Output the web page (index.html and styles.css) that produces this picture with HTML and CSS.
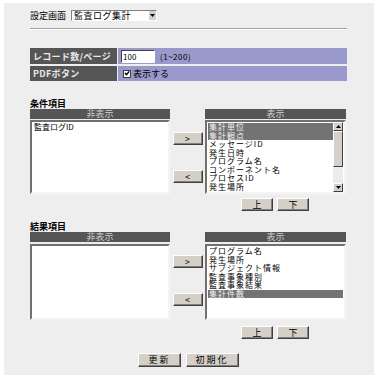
FILE: index.html
```html
<!DOCTYPE html>
<html lang="ja">
<head>
  <meta charset="UTF-8" />
  <title>監査ログ集計 設定</title>
  <link rel="stylesheet" href="styles.css">
</head>
<body>
  <div class="page">
    <div class="screen-row">
      <span>設定画面</span>
      <div class="select">
        <span class="select-text">監査ログ集計</span>
        <span class="select-btn"><svg width="5" height="3" viewBox="0 0 5 3"><path d="M0 0h5L2.5 3z" fill="#000"/></svg></span>
      </div>
    </div>
    <div class="rule"></div>

    <div class="settings">
      <div class="cell-head">レコード数/ページ</div>
      <div class="cell-body"><span class="textbox">100</span><span class="hint">(1~200)</span></div>
      <div class="cell-head">PDFボタン</div>
      <div class="cell-body">
        <span class="checkbox"><svg width="7" height="7" viewBox="0 0 7 7"><path d="M1 3l2 2 3-4" stroke="#000" stroke-width="1.6" fill="none"/></svg></span>
        表示する
      </div>
    </div>

    <div class="section-title">条件項目</div>
    <div class="picker">
      <div class="col">
        <div class="col-head">非表示</div>
        <div class="listbox">
          <div class="items">
            <div class="item">監査ログID</div>
          </div>
        </div>
      </div>
      <div class="movers">
        <button class="btn mover">&gt;</button>
        <button class="btn mover">&lt;</button>
      </div>
      <div class="col col-right">
        <div class="col-head">表示</div>
        <div class="listbox wide">
          <div class="items">
            <div class="item sel">集計単位</div>
            <div class="item sel">集計観点</div>
            <div class="item">メッセージID</div>
            <div class="item">発生日時</div>
            <div class="item">プログラム名</div>
            <div class="item">コンポーネント名</div>
            <div class="item">プロセスID</div>
            <div class="item">発生場所</div>
          </div>
          <div class="scrollbar">
            <span class="sb-btn"><svg width="5" height="3" viewBox="0 0 5 3"><path d="M0 3h5L2.5 0z" fill="#000"/></svg></span>
            <span class="sb-thumb"></span>
            <span class="sb-track"></span>
            <span class="sb-btn"><svg width="5" height="3" viewBox="0 0 5 3"><path d="M0 0h5L2.5 3z" fill="#000"/></svg></span>
          </div>
        </div>
      </div>
    </div>
    <div class="order">
      <button class="btn order-btn">上</button>
      <button class="btn order-btn">下</button>
    </div>

    <div class="section-title second">結果項目</div>
    <div class="picker">
      <div class="col">
        <div class="col-head">非表示</div>
        <div class="listbox tall"></div>
      </div>
      <div class="movers">
        <button class="btn mover">&gt;</button>
        <button class="btn mover">&lt;</button>
      </div>
      <div class="col col-right">
        <div class="col-head">表示</div>
        <div class="listbox tall wide">
          <div class="items">
            <div class="item">プログラム名</div>
            <div class="item">発生場所</div>
            <div class="item">サブジェクト情報</div>
            <div class="item">監査事象種別</div>
            <div class="item">監査事象結果</div>
            <div class="item sel">集計件数</div>
          </div>
        </div>
      </div>
    </div>
    <div class="order second">
      <button class="btn order-btn">上</button>
      <button class="btn order-btn">下</button>
    </div>

    <div class="footer">
      <button class="btn footer-btn">更新</button>
      <button class="btn footer-btn">初期化</button>
    </div>
  </div>
</body>
</html>
```

FILE: styles.css
```css
body {
  margin: 0;
  background: #fff;
  font-family: "Noto Sans CJK JP", sans-serif;
  font-size: 9px;
  color: #000;
}
.page {
  margin: 3px 5px 0 4px;
  height: 372px;
  box-sizing: border-box;
  padding: 7px 27px 0 26px;
  background: #eeeeee;
}
.screen-row {
  display: flex;
  align-items: center;
  gap: 5px;
  height: 11px;
  line-height: 11px;
}
.select {
  display: flex;
  width: 86px;
  height: 11px;
  box-sizing: border-box;
  border: 1px solid;
  border-color: #808080 #fff #fff #808080;
  background: #fff;
}
.select-text {
  flex: 1;
  padding-left: 2px;
  line-height: 9px;
  letter-spacing: 0.5px;
}
.select-btn {
  width: 7px;
  background: #d4d0c8;
  border-left: 1px solid #fff;
  display: flex;
  align-items: center;
  justify-content: center;
}
.rule {
  margin-top: 7px;
  border-top: 1px solid #a0a0a0;
  border-bottom: 1px solid #fff;
}
.settings {
  margin-top: 18px;
  display: grid;
  grid-template-columns: 87px 1fr;
  grid-template-rows: 16px 15px;
  column-gap: 1px;
  row-gap: 2px;
}
.cell-head {
  background: #555555;
  color: #e8e8e8;
  font-weight: bold;
  padding-left: 3px;
  display: flex;
  align-items: center;
  white-space: nowrap;
  letter-spacing: 0.3px;
}
.cell-body {
  background: #9999cc;
  display: flex;
  align-items: center;
  padding-left: 3px;
}
.textbox {
  width: 34px;
  height: 13px;
  box-sizing: border-box;
  background: #fff;
  border: 1px solid;
  border-color: #404040 #fff #fff #404040;
  padding-left: 1px;
  line-height: 11px;
  font-size: 8px;
}
.hint {
  margin-left: 5px;
  font-size: 8px;
  letter-spacing: 0.5px;
}
.checkbox {
  width: 8px;
  height: 8px;
  box-sizing: border-box;
  border: 1px solid #404040;
  background: #fff;
  display: flex;
  align-items: center;
  justify-content: center;
  margin: 0 2px 0 2px;
}
.checkbox svg {
  display: block;
}
.section-title {
  margin-top: 18px;
  height: 10px;
  line-height: 10px;
  font-weight: bold;
}
.section-title.second {
  margin-top: 11px;
}
.picker {
  display: flex;
}
.col {
  width: 140px;
}
.col-right {
  width: 141px;
}
.col-head {
  height: 10px;
  line-height: 10px;
  background: #555555;
  color: #cccccc;
  text-align: center;
}
.listbox {
  margin-top: 1px;
  height: 74px;
  box-sizing: border-box;
  border: 2px solid;
  border-color: #707070 #f4f4f4 #f4f4f4 #707070;
  background: #fff;
  display: flex;
  padding: 0 1px;
}
.listbox.tall {
  height: 76px;
  margin-top: 2px;
}
.items {
  flex: 1;
  padding-top: 1px;
}
.item {
  height: 8.5px;
  line-height: 8.5px;
  font-size: 8px;
  padding-left: 1px;
  white-space: nowrap;
}
.wide .item {
  letter-spacing: 1px;
}
.item.sel {
  background: #737373;
  color: #f0f0f0;
}
.scrollbar {
  width: 10px;
  display: flex;
  flex-direction: column;
}
.sb-btn {
  height: 9px;
  background: #d4d0c8;
  border: 1px solid;
  border-color: #fff #404040 #404040 #fff;
  box-sizing: border-box;
  display: flex;
  align-items: center;
  justify-content: center;
}
.sb-thumb {
  height: 36px;
  background: #d4d0c8;
  border: 1px solid;
  border-color: #fff #404040 #404040 #fff;
  box-sizing: border-box;
}
.sb-track {
  flex: 1;
  background: #ececec;
}
.movers {
  width: 35px;
  display: flex;
  flex-direction: column;
  align-items: center;
  padding-top: 23px;
  gap: 25px;
}
.btn {
  font-family: "Noto Sans CJK JP", sans-serif;
  font-size: 9px;
  padding: 0;
  background: #d4d0c8;
  color: #000;
  border: 1px solid;
  border-color: #fff #404040 #404040 #fff;
  box-shadow: inset -1px -1px #808080;
  line-height: 10px;
}
.mover {
  width: 30px;
  height: 13px;
}
.order {
  display: flex;
  justify-content: flex-end;
  gap: 4px;
  margin-top: 4px;
  padding-right: 38px;
}
.order.second {
  margin-top: 6px;
}
.order-btn {
  width: 32px;
  height: 13px;
}
.footer {
  display: flex;
  justify-content: center;
  gap: 5px;
  margin-top: 14px;
}
.footer-btn {
  height: 14px;
  padding: 0 9px;
  letter-spacing: 2px;
}
```
